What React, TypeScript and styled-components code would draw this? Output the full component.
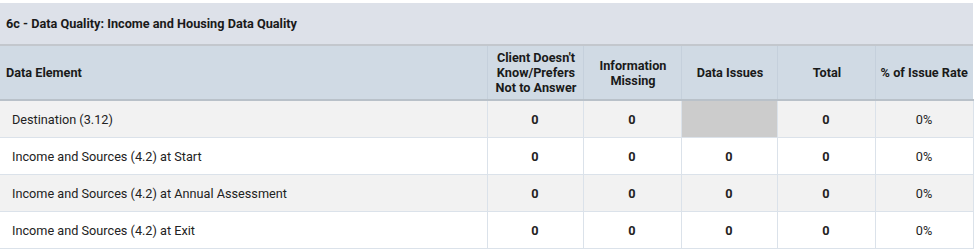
import * as React from "react";
import styled, { createGlobalStyle } from "styled-components";

const GlobalStyle = createGlobalStyle`
  body {
    margin: 0;
    padding: 3px 0 0 0;
    background: #ffffff;
    font-family: Roboto, "Liberation Sans", Arial, sans-serif;
    color: #212121;
  }
`;

const Panel = styled.div`
  width: 973px;
`;

const Title = styled.div`
  height: 41px;
  display: flex;
  align-items: center;
  padding: 0 6px;
  background: #dde1e9;
  border-bottom: 2px solid #c3c7cd;
  font-size: 12.7px;
  font-weight: 700;
  color: #1a1a1a;
`;

const Table = styled.table`
  width: 100%;
  border-collapse: collapse;
  table-layout: fixed;
  font-size: 12.7px;
`;

const HeadCell = styled.th<{ $left?: boolean }>`
  height: 53px;
  padding: 0 4px 0 6px;
  background: #d0dae4;
  border-left: 1px solid #c5d0dc;
  border-bottom: 2px solid #b9c1c9;
  text-align: ${(p) => (p.$left ? "left" : "center")};
  font-weight: 700;
  line-height: 15px;
  color: #1a1a1a;
  &:first-child {
    border-left: none;
  }
  &:last-child {
    white-space: nowrap;
    padding: 0 2px;
  }
`;

const Row = styled.tr<{ $shade: boolean }>`
  background: ${(p) => (p.$shade ? "#f2f2f2" : "#ffffff")};
`;

const Cell = styled.td<{ $left?: boolean; $blank?: boolean; $bold?: boolean }>`
  height: 36px;
  padding: 0 ${(p) => (p.$left ? "12px" : "6px")};
  border: 1px solid #dbe2ea;
  border-top: none;
  text-align: ${(p) => (p.$left ? "left" : "center")};
  font-weight: ${(p) => (p.$bold ? 700 : 400)};
  background: ${(p) => (p.$blank ? "#cccccc" : "transparent")};
  color: #222;
  &:first-child {
    border-left: none;
  }
`;

const columns = [
  { label: "Data Element", width: 487 },
  { label: "Client Doesn't Know/Prefers Not to Answer", width: 96 },
  { label: "Information Missing", width: 98 },
  { label: "Data Issues", width: 96 },
  { label: "Total", width: 98 },
  { label: "% of Issue Rate", width: 98 },
];

const rows = [
  { name: "Destination (3.12)", values: ["0", "0", null, "0"], rate: "0%" },
  { name: "Income and Sources (4.2) at Start", values: ["0", "0", "0", "0"], rate: "0%" },
  { name: "Income and Sources (4.2) at Annual Assessment", values: ["0", "0", "0", "0"], rate: "0%" },
  { name: "Income and Sources (4.2) at Exit", values: ["0", "0", "0", "0"], rate: "0%" },
];

export default function App() {
  return (
    <>
      <GlobalStyle />
      <Panel>
        <Title>6c - Data Quality: Income and Housing Data Quality</Title>
        <Table>
          <colgroup>
            {columns.map((c) => (
              <col key={c.label} style={{ width: c.width }} />
            ))}
          </colgroup>
          <thead>
            <tr>
              {columns.map((c, i) => (
                <HeadCell key={c.label} $left={i === 0}>
                  {c.label}
                </HeadCell>
              ))}
            </tr>
          </thead>
          <tbody>
            {rows.map((r, i) => (
              <Row key={r.name} $shade={i % 2 === 0}>
                <Cell $left>{r.name}</Cell>
                {r.values.map((v, j) =>
                  v === null ? (
                    <Cell key={j} $blank />
                  ) : (
                    <Cell key={j} $bold>
                      {v}
                    </Cell>
                  )
                )}
                <Cell>{r.rate}</Cell>
              </Row>
            ))}
          </tbody>
        </Table>
      </Panel>
    </>
  );
}
